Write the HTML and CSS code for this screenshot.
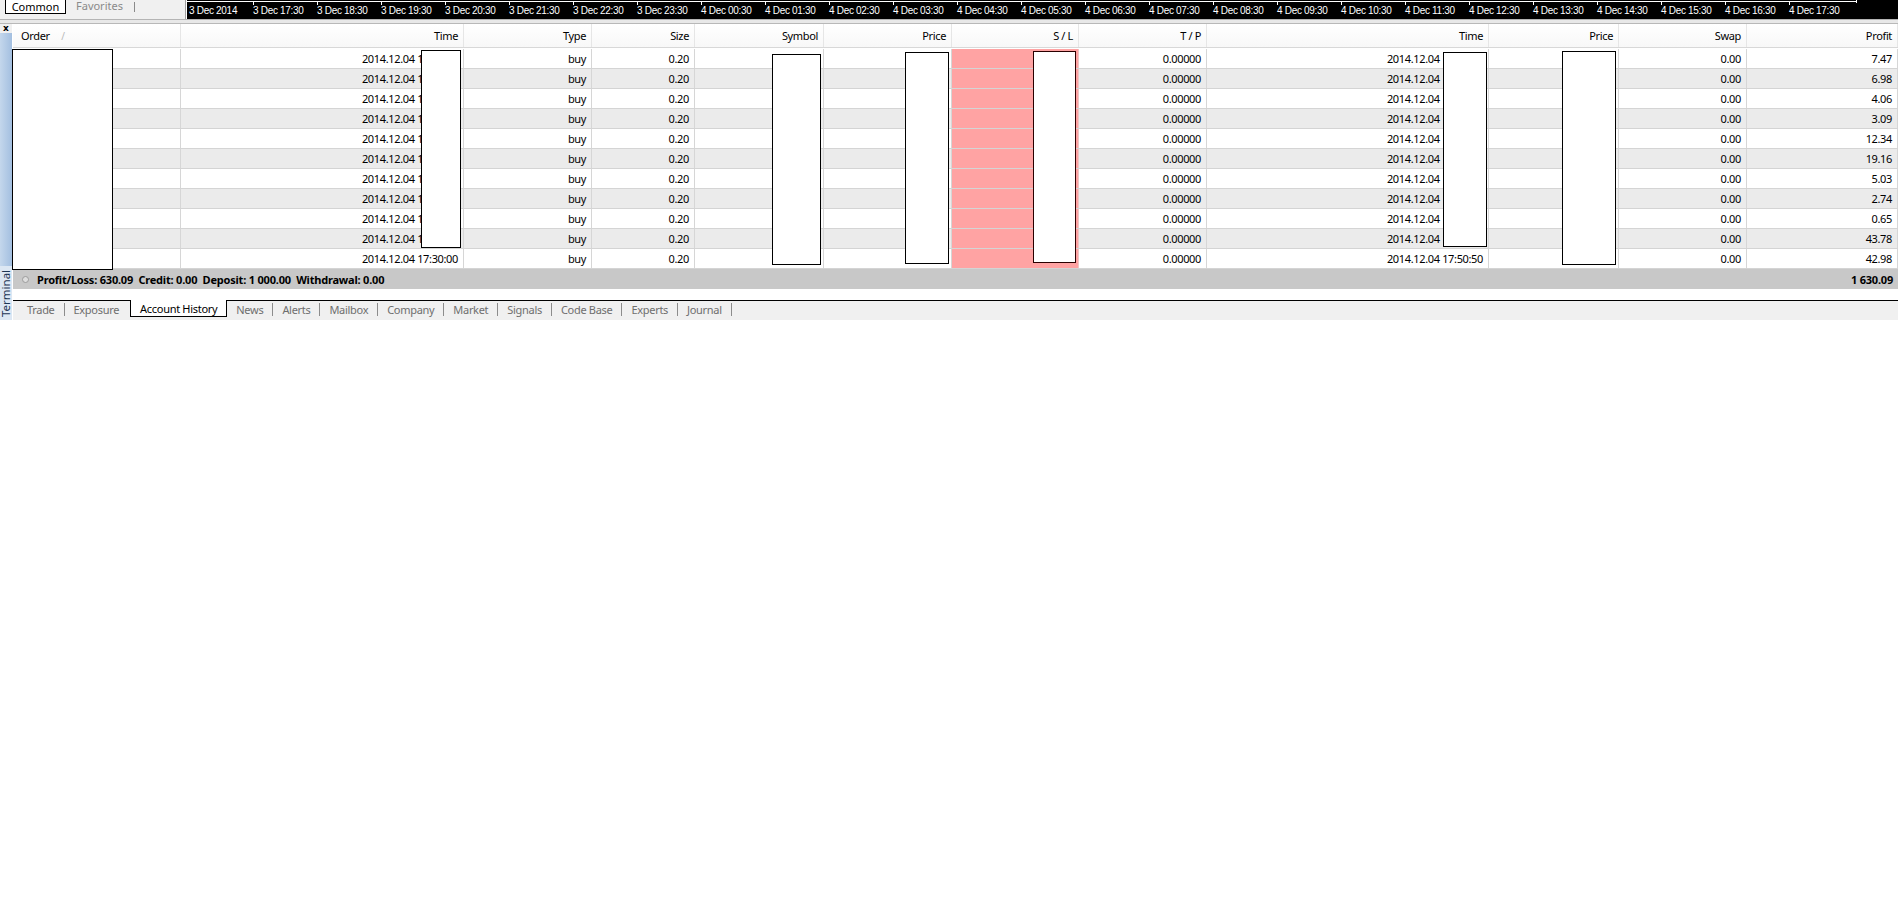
FILE: index.html
```html
<!DOCTYPE html>
<html lang="en">
<head>
  <meta charset="UTF-8">
  <title>Terminal - Account History</title>
  <link rel="stylesheet" href="styles.css">
</head>
<body>
  <!-- navigator tabs and chart time axis -->
  <div class="top">
    <div class="nav-tabs">
      <span class="nav-tab current">Common</span>
      <span class="nav-tab">Favorites</span>
      <span class="nav-sep"></span>
    </div>
    <div class="axis">
      <div class="axis-line"></div>
      <span>3 Dec 2014</span>
      <span>3 Dec 17:30</span>
      <span>3 Dec 18:30</span>
      <span>3 Dec 19:30</span>
      <span>3 Dec 20:30</span>
      <span>3 Dec 21:30</span>
      <span>3 Dec 22:30</span>
      <span>3 Dec 23:30</span>
      <span>4 Dec 00:30</span>
      <span>4 Dec 01:30</span>
      <span>4 Dec 02:30</span>
      <span>4 Dec 03:30</span>
      <span>4 Dec 04:30</span>
      <span>4 Dec 05:30</span>
      <span>4 Dec 06:30</span>
      <span>4 Dec 07:30</span>
      <span>4 Dec 08:30</span>
      <span>4 Dec 09:30</span>
      <span>4 Dec 10:30</span>
      <span>4 Dec 11:30</span>
      <span>4 Dec 12:30</span>
      <span>4 Dec 13:30</span>
      <span>4 Dec 14:30</span>
      <span>4 Dec 15:30</span>
      <span>4 Dec 16:30</span>
      <span>4 Dec 17:30</span>
    </div>
  </div>

  <div class="split"></div>

  <div class="terminal">
    <div class="side">
      <div class="close">x</div>
      <div class="side-bar">
        <span class="side-title">Terminal</span>
      </div>
    </div>

    <div class="term-main">
      <div class="history">
        <div class="row head">
          <div class="cell left">Order <span class="sort">/</span></div>
          <div class="cell">Time</div>
          <div class="cell">Type</div>
          <div class="cell">Size</div>
          <div class="cell">Symbol</div>
          <div class="cell">Price</div>
          <div class="cell">S / L</div>
          <div class="cell">T / P</div>
          <div class="cell">Time</div>
          <div class="cell">Price</div>
          <div class="cell">Swap</div>
          <div class="cell">Profit</div>
        </div>

        <div class="row first">
          <div class="cell"></div><div class="cell">2014.12.04 16:12:40</div><div class="cell">buy</div><div class="cell">0.20</div>
          <div class="cell"></div><div class="cell"></div><div class="cell sl"></div><div class="cell">0.00000</div>
          <div class="cell">2014.12.04 16:40:10</div><div class="cell"></div><div class="cell">0.00</div><div class="cell">7.47</div>
        </div>
        <div class="row">
          <div class="cell"></div><div class="cell">2014.12.04 16:20:05</div><div class="cell">buy</div><div class="cell">0.20</div>
          <div class="cell"></div><div class="cell"></div><div class="cell sl"></div><div class="cell">0.00000</div>
          <div class="cell">2014.12.04 16:41:22</div><div class="cell"></div><div class="cell">0.00</div><div class="cell">6.98</div>
        </div>
        <div class="row">
          <div class="cell"></div><div class="cell">2014.12.04 16:25:31</div><div class="cell">buy</div><div class="cell">0.20</div>
          <div class="cell"></div><div class="cell"></div><div class="cell sl"></div><div class="cell">0.00000</div>
          <div class="cell">2014.12.04 16:44:02</div><div class="cell"></div><div class="cell">0.00</div><div class="cell">4.06</div>
        </div>
        <div class="row">
          <div class="cell"></div><div class="cell">2014.12.04 16:31:18</div><div class="cell">buy</div><div class="cell">0.20</div>
          <div class="cell"></div><div class="cell"></div><div class="cell sl"></div><div class="cell">0.00000</div>
          <div class="cell">2014.12.04 16:50:47</div><div class="cell"></div><div class="cell">0.00</div><div class="cell">3.09</div>
        </div>
        <div class="row">
          <div class="cell"></div><div class="cell">2014.12.04 16:38:09</div><div class="cell">buy</div><div class="cell">0.20</div>
          <div class="cell"></div><div class="cell"></div><div class="cell sl"></div><div class="cell">0.00000</div>
          <div class="cell">2014.12.04 16:58:30</div><div class="cell"></div><div class="cell">0.00</div><div class="cell">12.34</div>
        </div>
        <div class="row">
          <div class="cell"></div><div class="cell">2014.12.04 16:45:52</div><div class="cell">buy</div><div class="cell">0.20</div>
          <div class="cell"></div><div class="cell"></div><div class="cell sl"></div><div class="cell">0.00000</div>
          <div class="cell">2014.12.04 17:05:11</div><div class="cell"></div><div class="cell">0.00</div><div class="cell">19.16</div>
        </div>
        <div class="row">
          <div class="cell"></div><div class="cell">2014.12.04 16:52:14</div><div class="cell">buy</div><div class="cell">0.20</div>
          <div class="cell"></div><div class="cell"></div><div class="cell sl"></div><div class="cell">0.00000</div>
          <div class="cell">2014.12.04 17:12:39</div><div class="cell"></div><div class="cell">0.00</div><div class="cell">5.03</div>
        </div>
        <div class="row">
          <div class="cell"></div><div class="cell">2014.12.04 17:01:40</div><div class="cell">buy</div><div class="cell">0.20</div>
          <div class="cell"></div><div class="cell"></div><div class="cell sl"></div><div class="cell">0.00000</div>
          <div class="cell">2014.12.04 17:20:08</div><div class="cell"></div><div class="cell">0.00</div><div class="cell">2.74</div>
        </div>
        <div class="row">
          <div class="cell"></div><div class="cell">2014.12.04 17:10:26</div><div class="cell">buy</div><div class="cell">0.20</div>
          <div class="cell"></div><div class="cell"></div><div class="cell sl"></div><div class="cell">0.00000</div>
          <div class="cell">2014.12.04 17:31:55</div><div class="cell"></div><div class="cell">0.00</div><div class="cell">0.65</div>
        </div>
        <div class="row">
          <div class="cell"></div><div class="cell">2014.12.04 17:20:03</div><div class="cell">buy</div><div class="cell">0.20</div>
          <div class="cell"></div><div class="cell"></div><div class="cell sl"></div><div class="cell">0.00000</div>
          <div class="cell">2014.12.04 17:45:20</div><div class="cell"></div><div class="cell">0.00</div><div class="cell">43.78</div>
        </div>
        <div class="row">
          <div class="cell"></div><div class="cell">2014.12.04 17:30:00</div><div class="cell">buy</div><div class="cell">0.20</div>
          <div class="cell"></div><div class="cell"></div><div class="cell sl"></div><div class="cell">0.00000</div>
          <div class="cell">2014.12.04 17:50:50</div><div class="cell"></div><div class="cell">0.00</div><div class="cell">42.98</div>
        </div>
      </div>

      <div class="summary">
        <span class="sum-icon"></span>
        <span class="sum-text">Profit/Loss: 630.09&nbsp; Credit: 0.00&nbsp; Deposit: 1 000.00&nbsp; Withdrawal: 0.00</span>
        <span class="sum-total">1 630.09</span>
      </div>

      <div class="tabs">
        <span class="tab">Trade</span><span class="sep"></span>
        <span class="tab">Exposure</span>
        <span class="tab active">Account History</span>
        <span class="tab">News</span><span class="sep"></span>
        <span class="tab">Alerts</span><span class="sep"></span>
        <span class="tab">Mailbox</span><span class="sep"></span>
        <span class="tab">Company</span><span class="sep"></span>
        <span class="tab">Market</span><span class="sep"></span>
        <span class="tab">Signals</span><span class="sep"></span>
        <span class="tab">Code Base</span><span class="sep"></span>
        <span class="tab">Experts</span><span class="sep"></span>
        <span class="tab">Journal</span><span class="sep"></span>
      </div>
    </div>

    <!-- blanked-out fields laid over the grid -->
    <div class="mask mask-order"></div>
    <div class="mask mask-time"></div>
    <div class="mask mask-symbol"></div>
    <div class="mask mask-price"></div>
    <div class="mask mask-sl"></div>
    <div class="mask mask-time2"></div>
    <div class="mask mask-price2"></div>
  </div>
</body>
</html>
```

FILE: styles.css
```css
/* Base */
* {
  margin: 0;
  padding: 0;
  box-sizing: border-box;
}

body {
  font-family: 'Noto Sans', 'Open Sans', sans-serif;
  font-size: 11px;
  letter-spacing: -0.35px;
  color: #000;
  background: #fff;
  width: 1898px;
}

/* Top strip: navigator tabs + chart axis */
.top {
  display: flex;
  height: 19px;
}

.nav-tabs {
  width: 186px;
  background: #f0f0f0;
  border-right: 1px solid #a0a0a0;
  display: flex;
  align-items: flex-start;
  padding-left: 5px;
}

.nav-tab {
  height: 14px;
  line-height: 12px;
  padding: 0 9px 0 10px;
  color: #8a8a8a;
  font-size: 11px;
  letter-spacing: 0;
}

.nav-tab.current {
  background: #fff;
  color: #000;
  border: 1px solid #000;
  margin-top: -1px;
  height: 15px;
  width: 61px;
  padding: 0;
  text-align: center;
  line-height: 13px;
}

.nav-sep {
  width: 1px;
  height: 10px;
  margin-top: 2px;
  margin-left: 2px;
  background: #8a8a8a;
}

.axis {
  flex: 1;
  margin-left: 1px;
  background: #000;
  position: relative;
  display: flex;
  padding-left: 2px;
}

.axis-line {
  position: absolute;
  left: 0;
  top: 1px;
  width: 1670px;
  height: 1px;
  background: #fff;
}

.axis-line::after {
  content: "";
  position: absolute;
  right: 0;
  top: -1px;
  width: 1px;
  height: 3px;
  background: #fff;
}

.axis span {
  position: relative;
  flex: 0 0 64px;
  color: #fff;
  font-family: 'Liberation Sans', Arial, sans-serif;
  font-size: 10px;
  letter-spacing: -0.3px;
  padding-top: 5px;
  line-height: 11px;
  white-space: nowrap;
}

.axis span::before {
  content: "";
  position: absolute;
  left: 0;
  top: 1px;
  width: 1px;
  height: 4px;
  background: #fff;
}

.axis span:first-of-type::before {
  display: none;
}

/* Splitter between chart and terminal */
.split {
  height: 5px;
  background: #e8e8e8;
  border-top: 1px solid #b4b4b4;
  border-bottom: 1px solid #b8b8b8;
}

/* Terminal window */
.terminal {
  position: relative;
  display: flex;
}

.side {
  width: 12px;
  margin-right: 1px;
  display: flex;
  flex-direction: column;
}

.close {
  height: 9px;
  background: #f0f0f0;
  font-family: 'DejaVu Sans', sans-serif;
  font-weight: bold;
  font-size: 9px;
  line-height: 8px;
  text-align: center;
  letter-spacing: 0;
}

.side-bar {
  height: 287px;
  background: linear-gradient(to right, #c4d7ec, #a3bfe0);
  display: flex;
  align-items: flex-end;
}

.side-title {
  display: block;
  width: 12px;
  height: 54px;
  background: #dce7f3;
  writing-mode: vertical-rl;
  transform: rotate(180deg);
  font-size: 11.5px;
  letter-spacing: 0;
  line-height: 12px;
  color: #1d3553;
  text-align: center;
}

.term-main {
  width: 1885px;
}

/* Account history grid */
.row {
  display: grid;
  grid-template-columns: 168px 283px 128px 103px 129px 128px 127px 128px 282px 130px 128px 151px;
  height: 20px;
  border-bottom: 1px solid #d4d4d4;
}

.row:nth-child(odd) {
  background: #ebebeb;
}

.row.head {
  height: 24px;
  background: linear-gradient(#fff, #f8f8f8);
  border-bottom: 1px solid #d8d8d8;
}

.row.first {
  height: 21px;
  padding-top: 1px;
}

.cell {
  border-right: 1px solid #d6d6d6;
  text-align: right;
  padding-right: 5px;
  line-height: 19px;
  white-space: nowrap;
  overflow: hidden;
}

.head .cell {
  line-height: 23px;
  border-right-color: #e6e6e6;
}

.head .cell.left {
  text-align: left;
  padding-left: 8px;
}

.sort {
  color: #b8b8b8;
  margin-left: 9px;
  font-size: 10px;
}

.cell.sl {
  background: #ffa3a3;
  border-right-color: #f0c4c4;
}

/* Totals line */
.summary {
  height: 20px;
  background: #c8c8c8;
  display: flex;
  align-items: center;
  font-weight: bold;
  letter-spacing: -0.2px;
  padding: 0 5px 0 9px;
}

.sum-icon {
  width: 7px;
  height: 7px;
  border-radius: 50%;
  border: 1px solid #9c9c9c;
  background: #dedede;
  margin-right: 8px;
}

.sum-total {
  margin-left: auto;
}

/* Bottom tab strip */
.tabs {
  margin-top: 11px;
  height: 20px;
  background: #f0f0f0;
  border-top: 1px solid #000;
  display: flex;
  align-items: flex-start;
  padding-left: 5px;
}

.tab {
  padding: 0 9px;
  color: #6e6e6e;
  line-height: 17px;
  white-space: nowrap;
  letter-spacing: -0.3px;
}

.tab.active {
  background: #fff;
  color: #000;
  margin: -1px 0 0 2px;
  height: 17px;
  border: 1px solid #000;
  border-top: none;
  line-height: 17px;
}

.sep {
  width: 1px;
  height: 13px;
  margin-top: 2px;
  background: #8c8c8c;
}

/* Blank boxes over hidden fields */
.mask {
  position: absolute;
  background: #fff;
  border: 1px solid #000;
}

.mask-order  { left: 12px;   top: 25px; width: 101px; height: 221px; }
.mask-time   { left: 421px;  top: 26px; width: 40px;  height: 198px; }
.mask-symbol { left: 772px;  top: 30px; width: 49px;  height: 211px; }
.mask-price  { left: 905px;  top: 28px; width: 44px;  height: 212px; }
.mask-sl     { left: 1033px; top: 27px; width: 43px;  height: 212px; border-color: #2a0000; }
.mask-time2  { left: 1443px; top: 28px; width: 44px;  height: 195px; }
.mask-price2 { left: 1562px; top: 27px; width: 54px;  height: 214px; }
```
